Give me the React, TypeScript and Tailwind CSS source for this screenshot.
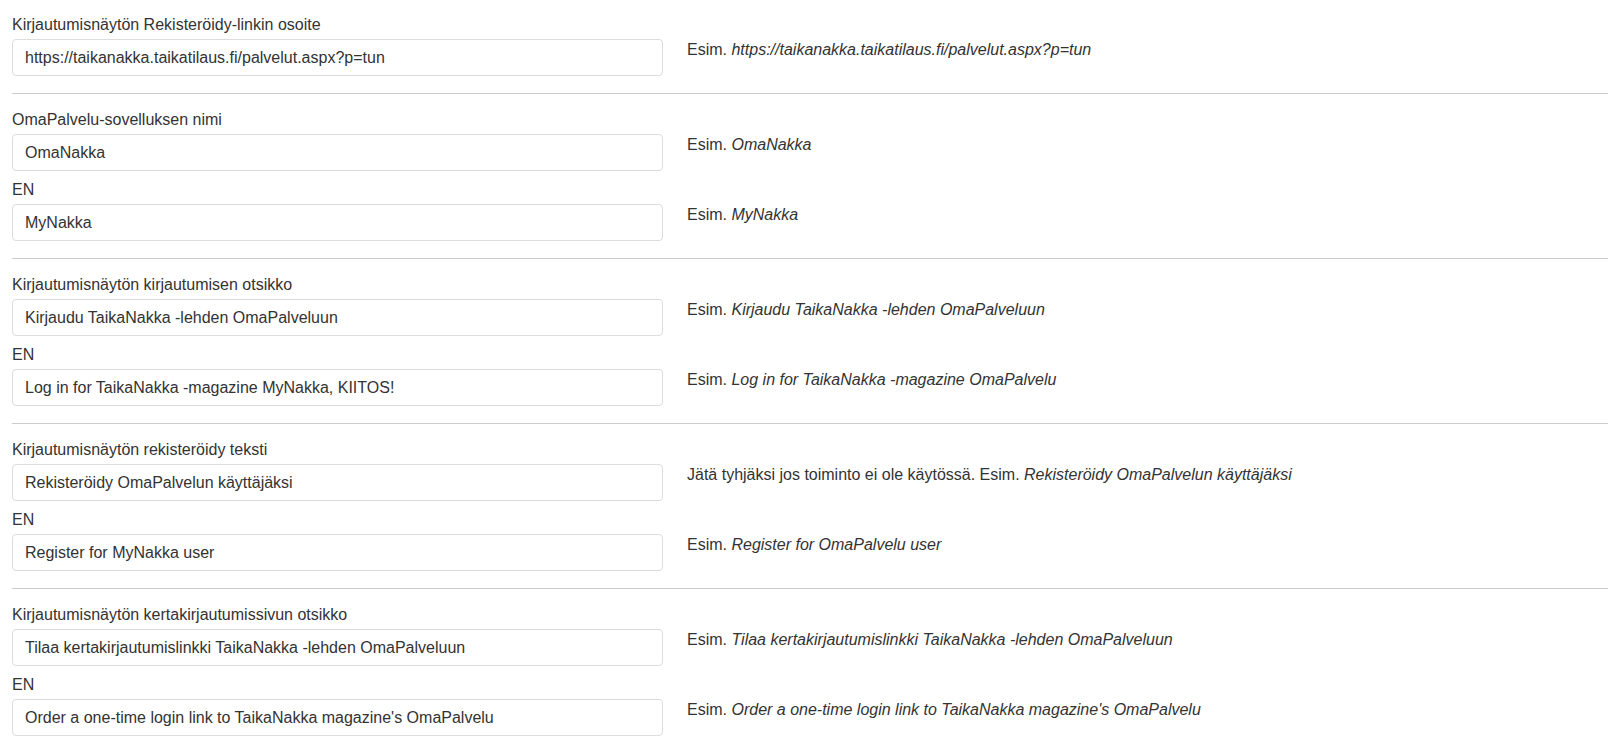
import React from "react";

type Field = { label: string; value: string; help: React.ReactNode };

const Ex = ({ prefix, text }: { prefix?: string; text: string }) => (
  <>
    {prefix ? prefix + " " : ""}Esim. <em className="italic">{text}</em>
  </>
);

const sections: Field[][] = [
  [
    {
      label: "Kirjautumisnäytön Rekisteröidy-linkin osoite",
      value: "https://taikanakka.taikatilaus.fi/palvelut.aspx?p=tun",
      help: <Ex text="https://taikanakka.taikatilaus.fi/palvelut.aspx?p=tun" />,
    },
  ],
  [
    { label: "OmaPalvelu-sovelluksen nimi", value: "OmaNakka", help: <Ex text="OmaNakka" /> },
    { label: "EN", value: "MyNakka", help: <Ex text="MyNakka" /> },
  ],
  [
    {
      label: "Kirjautumisnäytön kirjautumisen otsikko",
      value: "Kirjaudu TaikaNakka -lehden OmaPalveluun",
      help: <Ex text="Kirjaudu TaikaNakka -lehden OmaPalveluun" />,
    },
    {
      label: "EN",
      value: "Log in for TaikaNakka -magazine MyNakka, KIITOS!",
      help: <Ex text="Log in for TaikaNakka -magazine OmaPalvelu" />,
    },
  ],
  [
    {
      label: "Kirjautumisnäytön rekisteröidy teksti",
      value: "Rekisteröidy OmaPalvelun käyttäjäksi",
      help: <Ex prefix="Jätä tyhjäksi jos toiminto ei ole käytössä." text="Rekisteröidy OmaPalvelun käyttäjäksi" />,
    },
    {
      label: "EN",
      value: "Register for MyNakka user",
      help: <Ex text="Register for OmaPalvelu user" />,
    },
  ],
  [
    {
      label: "Kirjautumisnäytön kertakirjautumissivun otsikko",
      value: "Tilaa kertakirjautumislinkki TaikaNakka -lehden OmaPalveluun",
      help: <Ex text="Tilaa kertakirjautumislinkki TaikaNakka -lehden OmaPalveluun" />,
    },
    {
      label: "EN",
      value: "Order a one-time login link to TaikaNakka magazine's OmaPalvelu",
      help: <Ex text="Order a one-time login link to TaikaNakka magazine's OmaPalvelu" />,
    },
  ],
];

function FieldRow({ f }: { f: Field }) {
  return (
    <div className="flex flex-col">
      <label className="h-5 leading-5 mb-1">{f.label}</label>
      <div className="flex items-start gap-6">
        <input
          type="text"
          readOnly
          defaultValue={f.value}
          className="w-[651px] h-[37px] px-3 border border-[#dcdcdc] rounded-[4px] text-[#333] bg-white outline-none"
        />
        <div className="mt-px leading-5">{f.help}</div>
      </div>
    </div>
  );
}

export default function App() {
  return (
    <div
      className="min-h-screen bg-white text-[16px] text-[#333] pl-3 pr-[3px] pt-[15px]"
      style={{ fontFamily: '"Liberation Sans", Arial, sans-serif' }}
    >
      {sections.map((sec, i) => (
        <div key={i}>
          {i > 0 && <div className="h-px bg-[#cccccc] mt-[17px] mb-4" />}
          <div className="flex flex-col gap-[9px]">
            {sec.map((f, j) => (
              <FieldRow key={j} f={f} />
            ))}
          </div>
        </div>
      ))}
    </div>
  );
}
